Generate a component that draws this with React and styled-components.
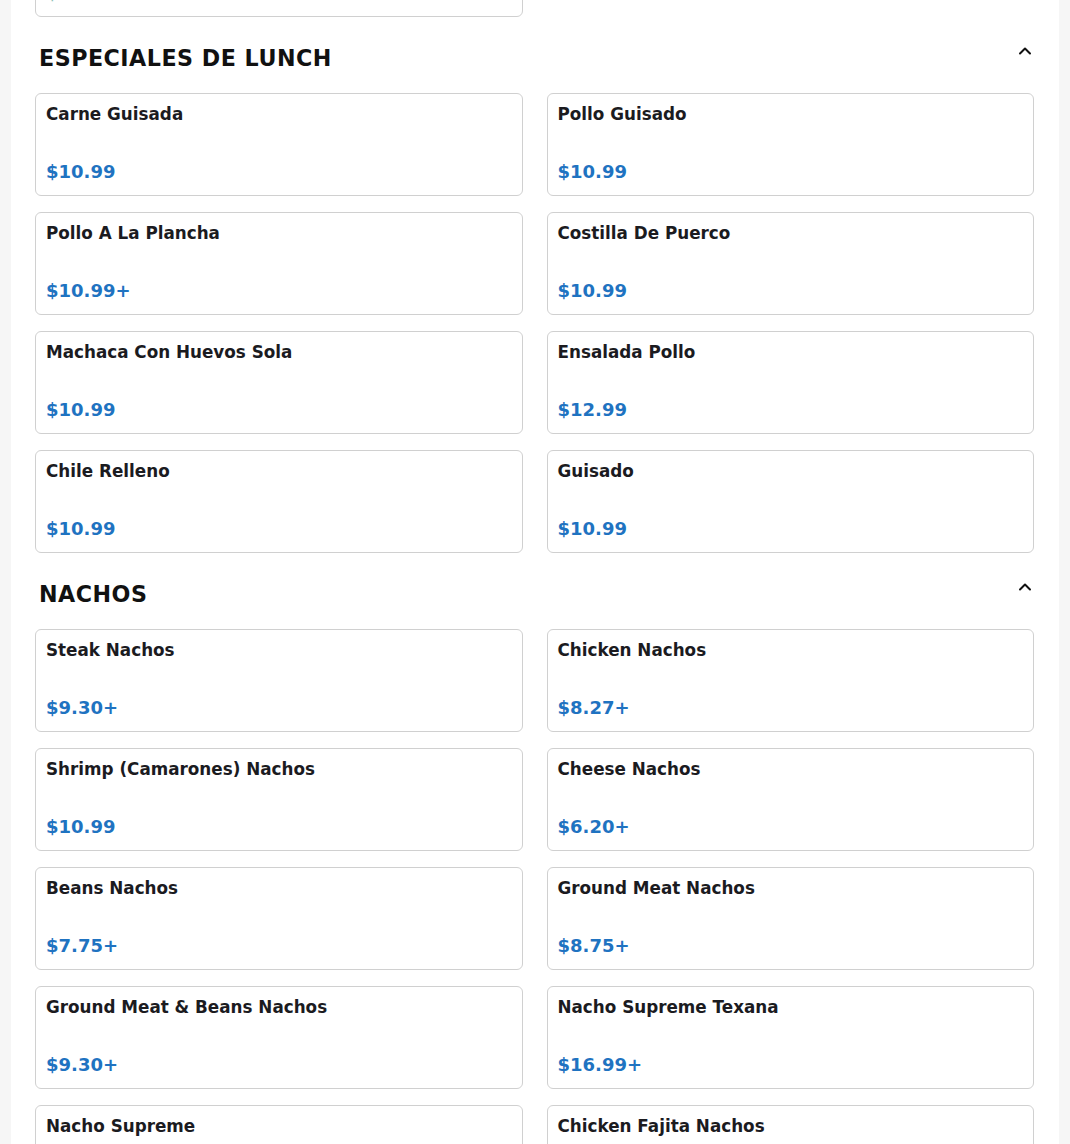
import styled, { createGlobalStyle } from "styled-components";

const GlobalStyle = createGlobalStyle`
  body {
    margin: 0;
    background: #f6f6f6;
    font-family: "DejaVu Sans", "Noto Sans", sans-serif;
    color: #1b1b1f;
  }
`;

const Page = styled.div`
  max-width: 1048px;
  margin: -86px auto 0;
  background: #ffffff;
  padding: 0 25px 40px 24px;
  box-sizing: border-box;
`;

const Section = styled.section`
  margin-bottom: 24px;
`;

const Header = styled.div`
  display: flex;
  justify-content: space-between;
  align-items: flex-start;
  margin-bottom: 18px;
`;

const Title = styled.h2`
  margin: 0;
  padding-left: 4px;
  font-size: 22.2px;
  line-height: 34px;
  letter-spacing: 0.5px;
  font-weight: 700;
  color: #111;
`;

const Toggle = styled.button`
  border: none;
  background: none;
  padding: 0;
  margin: 2px 1px 0 0;
  width: 16px;
  height: 16px;
  display: flex;
  cursor: pointer;
  color: #111;
`;

const Grid = styled.div`
  display: grid;
  grid-template-columns: 1fr 1fr;
  gap: 16px 24px;
`;

const Card = styled.div`
  min-height: 103px;
  box-sizing: border-box;
  border: 1px solid #d0d0d0;
  border-radius: 6px;
  padding: 10px 10px 12px;
  display: flex;
  flex-direction: column;
  justify-content: space-between;
  cursor: pointer;
`;

const Name = styled.div`
  font-size: 16.8px;
  font-weight: 700;
  line-height: 20px;
  color: #1b1b1f;
`;

const Price = styled.div`
  font-size: 18px;
  font-weight: 700;
  line-height: 22px;
  color: ${(p) => (p.$faded ? "#8fc3b8" : "#1f73c1")};
`;

const Chevron = () => (
  <svg width="16" height="16" viewBox="0 0 16 16" fill="none">
    <path d="M3 10.5 8 5.5l5 5" stroke="currentColor" strokeWidth="2" strokeLinecap="round" strokeLinejoin="round" />
  </svg>
);

const sections = [
  {
    title: "ESPECIALES DE LUNCH",
    items: [
      ["Carne Guisada", "$10.99"],
      ["Pollo Guisado", "$10.99"],
      ["Pollo A La Plancha", "$10.99+"],
      ["Costilla De Puerco", "$10.99"],
      ["Machaca Con Huevos Sola", "$10.99"],
      ["Ensalada Pollo", "$12.99"],
      ["Chile Relleno", "$10.99"],
      ["Guisado", "$10.99"],
    ],
  },
  {
    title: "NACHOS",
    items: [
      ["Steak Nachos", "$9.30+"],
      ["Chicken Nachos", "$8.27+"],
      ["Shrimp (Camarones) Nachos", "$10.99"],
      ["Cheese Nachos", "$6.20+"],
      ["Beans Nachos", "$7.75+"],
      ["Ground Meat Nachos", "$8.75+"],
      ["Ground Meat & Beans Nachos", "$9.30+"],
      ["Nacho Supreme Texana", "$16.99+"],
      ["Nacho Supreme", "$13.99+"],
      ["Chicken Fajita Nachos", "$10.99+"],
    ],
  },
];

const App = () => (
  <>
    <GlobalStyle />
    <Page>
      <Section>
        <Grid>
          <Card>
            <Name>Kids Quesadilla</Name>
            <Price $faded>$6.99</Price>
          </Card>
        </Grid>
      </Section>
      {sections.map((s) => (
        <Section key={s.title}>
          <Header>
            <Title>{s.title}</Title>
            <Toggle aria-label="Collapse">
              <Chevron />
            </Toggle>
          </Header>
          <Grid>
            {s.items.map(([name, price]) => (
              <Card key={name}>
                <Name>{name}</Name>
                <Price>{price}</Price>
              </Card>
            ))}
          </Grid>
        </Section>
      ))}
    </Page>
  </>
);

export default App;
